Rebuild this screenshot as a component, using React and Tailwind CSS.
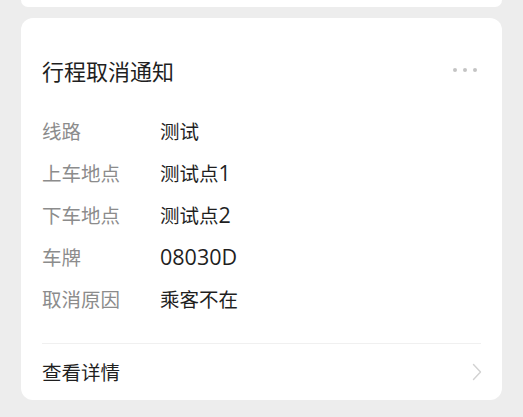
const rows = [
  ['线路', '测试'],
  ['上车地点', '测试点1'],
  ['下车地点', '测试点2'],
  ['车牌', '08030D'],
  ['取消原因', '乘客不在'],
];

// latin runs are a touch bigger in the source font
function Value({ text }) {
  return text.split(/([A-Za-z0-9]+)/).map((p, i) =>
    /^[A-Za-z0-9]+$/.test(p) ? (
      <span key={i} className="font-['Open_Sans'] text-[21.5px]">
        {p}
      </span>
    ) : (
      <span key={i}>{p}</span>
    )
  );
}

export default function App() {
  return (
    <div
      className="flex h-[417px] w-[523px] flex-col overflow-hidden bg-[#ededed] px-[21px]"
      style={{ fontFamily: '"Noto Sans CJK SC", "Noto Sans", sans-serif' }}
    >
      <div className="h-[7px] shrink-0 rounded-b-[12px] bg-white" />

      <div className="mt-[11px] flex flex-col rounded-[12px] bg-white px-[21px]">
        <div className="mt-[38px] flex h-[28px] items-center justify-between">
          <span className="text-[22px] leading-[28px] text-[#1f1f1f]">行程取消通知</span>
          <div className="mr-[4px] flex gap-[6px]">
            <span className="h-[4px] w-[4px] rounded-full bg-[#c4c4c4]" />
            <span className="h-[4px] w-[4px] rounded-full bg-[#c4c4c4]" />
            <span className="h-[4px] w-[4px] rounded-full bg-[#c4c4c4]" />
          </div>
        </div>

        <div className="mt-[26px] flex flex-col">
          {rows.map(([k, v]) => (
            <div key={k} className="flex h-[42px] items-center text-[19.5px] leading-[28px]">
              <span className="w-[118px] shrink-0 text-[#8c8c8c]">{k}</span>
              <span className="text-[#1f1f1f]">
                <Value text={v} />
              </span>
            </div>
          ))}
        </div>

        <div className="mt-[23px] h-px bg-[#f0f0f0]" />

        <div className="flex h-[56px] items-center justify-between">
          <span className="text-[19.5px] text-[#1f1f1f]">查看详情</span>
          <svg width="10" height="18" viewBox="0 0 10 18" fill="none" className="-mr-[1px]">
            <path d="M1.5 1.5 L8.5 9 L1.5 16.5" stroke="#d2d2d2" strokeWidth="1.4" strokeLinecap="round" strokeLinejoin="round" />
          </svg>
        </div>
      </div>
    </div>
  );
}
